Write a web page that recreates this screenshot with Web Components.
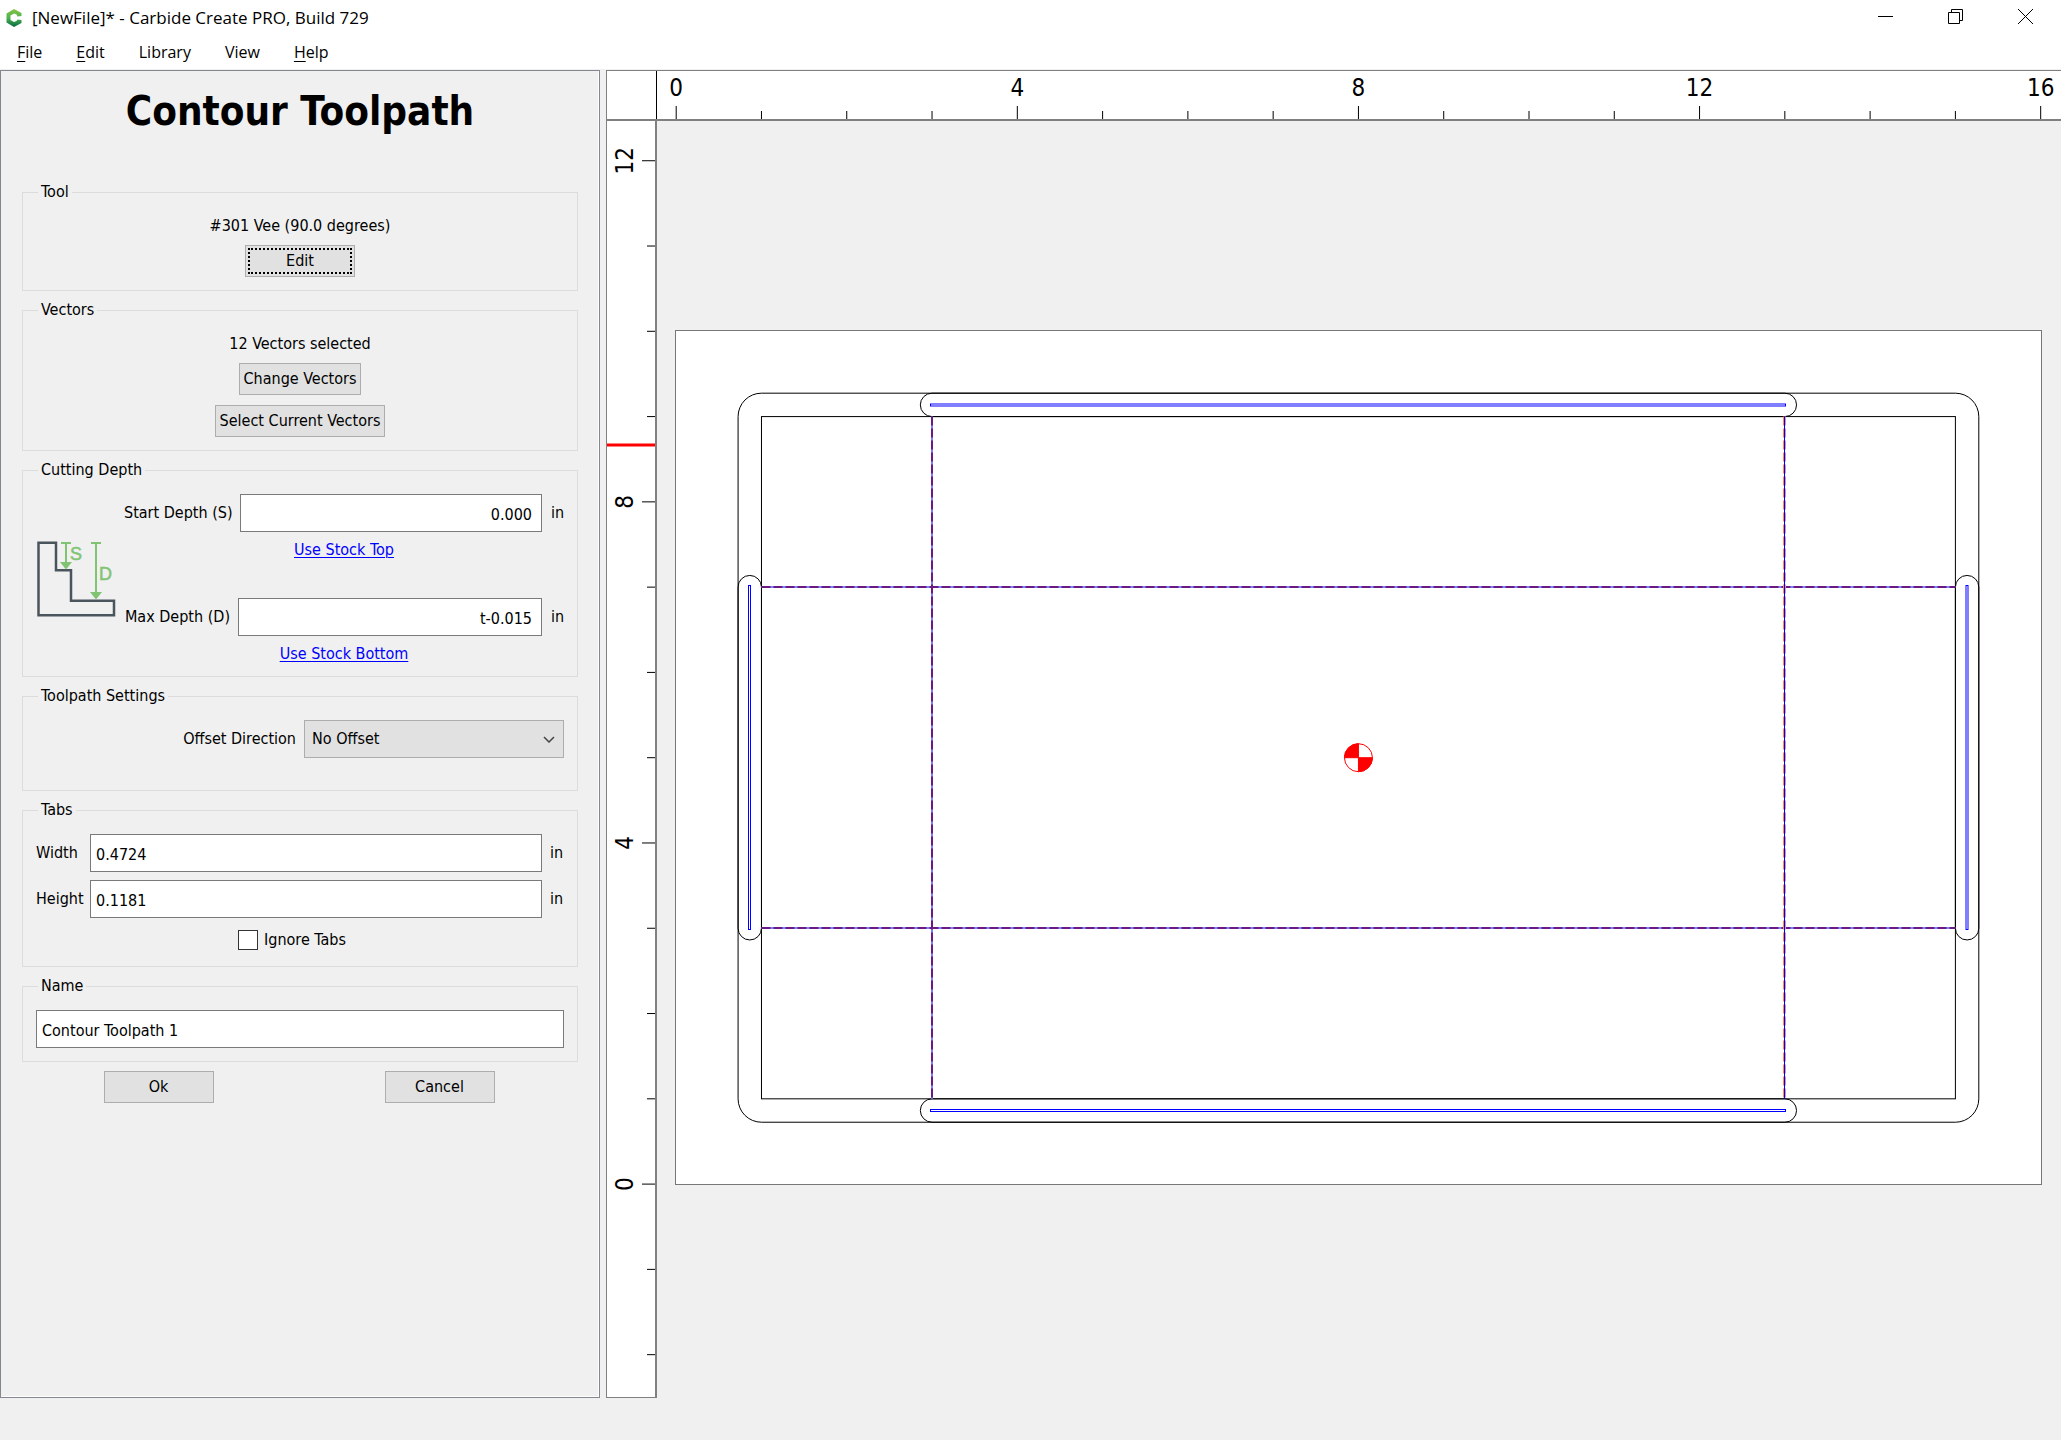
<!DOCTYPE html>
<html lang="en">
<head>
<meta charset="utf-8">
<title>[NewFile]* - Carbide Create PRO, Build 729</title>
<style>
  html, body { margin: 0; height: 100%; }
  body {
    background: #f0f0f0;
    color: #000;
    font: 16px/20px "DejaVu Sans Condensed", "DejaVu Sans", sans-serif;
    --title-font: 17px/20px "Open Sans", "Noto Sans", sans-serif;
    --menu-font: 16px/20px "Open Sans", "Noto Sans", sans-serif;
  }
</style>
</head>
<body>
<cc-window>
  <cc-titlebar slot="title">[NewFile]* - Carbide Create PRO, Build 729</cc-titlebar>
  <cc-menubar slot="menu">
    <cc-menu><u>F</u>ile</cc-menu>
    <cc-menu><u>E</u>dit</cc-menu>
    <cc-menu>Library</cc-menu>
    <cc-menu>View</cc-menu>
    <cc-menu><u>H</u>elp</cc-menu>
  </cc-menubar>

  <cc-panel slot="panel" heading="Contour Toolpath">
    <cc-group legend="Tool">
      <cc-stack>
        <span>#301 Vee (90.0 degrees)</span>
        <cc-button focused>Edit</cc-button>
      </cc-stack>
    </cc-group>

    <cc-group legend="Vectors">
      <cc-stack>
        <span>12 Vectors selected</span>
        <cc-stack spaced>
          <cc-button fit>Change Vectors</cc-button>
          <cc-button fit>Select Current Vectors</cc-button>
        </cc-stack>
      </cc-stack>
    </cc-group>

    <cc-group legend="Cutting Depth">
      <cc-depths>
        <cc-depth-icon slot="icon"></cc-depth-icon>
        <cc-depth>
          <cc-field label="Start Depth (S)" value="0.000" unit="in" align="right" style="--label: 108px"></cc-field>
          <cc-link>Use Stock Top</cc-link>
        </cc-depth>
        <cc-depth>
          <cc-field label="Max Depth (D)" value="t-0.015" unit="in" align="right" style="--label: 106px"></cc-field>
          <cc-link>Use Stock Bottom</cc-link>
        </cc-depth>
      </cc-depths>
    </cc-group>

    <cc-group legend="Toolpath Settings" roomy>
      <cc-select label="Offset Direction" options="No Offset|Outside / Right|Inside / Left"></cc-select>
    </cc-group>

    <cc-group legend="Tabs">
      <cc-rows>
        <cc-field label="Width" value="0.4724" unit="in" style="--label: 46px"></cc-field>
        <cc-field label="Height" value="0.1181" unit="in" style="--label: 46px"></cc-field>
        <cc-check label="Ignore Tabs"></cc-check>
      </cc-rows>
    </cc-group>

    <cc-group legend="Name">
      <cc-field name="Name" value="Contour Toolpath 1"></cc-field>
    </cc-group>

    <cc-actions>
      <cc-button>Ok</cc-button>
      <cc-button>Cancel</cc-button>
    </cc-actions>
  </cc-panel>

  <cc-workspace slot="work">
    <cc-ruler slot="top" axis="x"></cc-ruler>
    <cc-ruler slot="side" axis="y"></cc-ruler>
    <cc-stage slot="stage"></cc-stage>
  </cc-workspace>
</cc-window>

<script>
  // Registers an element whose shadow tree is built from a markup string.
  const define = (tag, render) => customElements.define(tag, class extends HTMLElement {
    connectedCallback() {
      if (this.shadowRoot) return;
      const template = document.createElement('template');
      template.innerHTML = '<style>:host,*{box-sizing:border-box}</style>' + render(this);
      this.attachShadow({ mode: 'open' }).append(template.content.cloneNode(true));
    }
  });

  /* ---- Window frame ---- */

  define('cc-window', () => `
    <style>
      :host { display: flex; flex-direction: column; min-height: 100vh; }
      header { background: #fff; }
      main { flex: 1; display: flex; gap: 6px; padding: 1px 0 42px; }
      slot[name=panel]::slotted(*) { flex: 0 0 600px; }
      slot[name=work]::slotted(*) { flex: 1; min-width: 0; }
    </style>
    <header><slot name="title"></slot><slot name="menu"></slot></header>
    <main><slot name="panel"></slot><slot name="work"></slot></main>`);

  define('cc-titlebar', () => `
    <style>
      :host { display: flex; align-items: center; height: 35px; padding: 0 1px 0 6px; font: var(--title-font); }
      .logo { flex: none; margin-right: 9px; }
      .text { flex: 1; }
      button { width: 70px; height: 33px; padding: 0; border: 0; background: none; align-self: flex-start; }
      button svg { display: block; margin: auto; fill: none; stroke: #000; }
    </style>
    <svg class="logo" width="17" height="18" viewBox="0 0 17 18">
      <defs><linearGradient id="g" x1="0" y1="0" x2="0" y2="1">
        <stop offset="0" stop-color="#86c440"/><stop offset=".5" stop-color="#4fb254"/><stop offset="1" stop-color="#04683f"/>
      </linearGradient></defs>
      <path fill="url(#g)" d="M8 0 L15.500 4 V7 L11.500 7.500 L10.500 5.500 L8 4.500 L4.500 6.500 V11 L8 13 L10.500 12 L11.500 10.500 L15.500 11 V14 L8 18 L0.500 13.500 V4.500 Z"/>
    </svg>
    <span class="text"><slot></slot></span>
    <button aria-label="Minimize"><svg width="15" height="15"><path d="M0 7.500H15"/></svg></button>
    <button aria-label="Restore"><svg width="15" height="15"><path d="M.5 3.500H11.500V14.500H.5ZM3.500 3.500V.5H14.500V11.500H11.500"/></svg></button>
    <button aria-label="Close"><svg width="15" height="15"><path d="M0 0L15 15M15 0L0 15"/></svg></button>`);

  define('cc-menubar', () => `
    <style>:host { display: flex; height: 34px; }</style>
    <slot></slot>`);

  define('cc-menu', () => `
    <style>
      :host { display: flex; }
      button { padding: 0 17px; border: 0; background: none; color: inherit; font: var(--menu-font); }
      ::slotted(u) { text-underline-offset: 3px; text-decoration-thickness: 1px; }
    </style>
    <button><slot></slot></button>`);

  /* ---- Side panel ---- */

  define('cc-panel', host => `
    <style>
      :host { display: flex; flex-direction: column; gap: 9px; padding: 18px 21px 0;
        border: 1px solid #828790; box-shadow: inset -1px -1px #fff; }
      h1 { margin: 0 0 40px; font-size: 40px; line-height: 44px; text-align: center; }
    </style>
    <h1>${host.getAttribute('heading')}</h1><slot></slot>`);

  define('cc-group', host => `
    <style>
      :host { display: block; }
      fieldset { margin: 0; min-width: 0; padding: 14px 13px 13px; border: 1px solid #dcdcdc; }
      :host([roomy]) fieldset { padding-bottom: 32px; }
      legend { margin-left: 2px; padding: 0 3px; line-height: 20px; }
    </style>
    <fieldset><legend>${host.getAttribute('legend')}</legend><slot></slot></fieldset>`);

  define('cc-stack', () => `
    <style>
      :host { display: flex; flex-direction: column; align-items: center; gap: 9px; }
      :host([spaced]) { gap: 10px; }
    </style>
    <slot></slot>`);

  define('cc-rows', () => `
    <style>:host { display: flex; flex-direction: column; gap: 8px; }</style>
    <slot></slot>`);

  define('cc-actions', () => `
    <style>
      :host { display: grid; grid-template-columns: 1fr 1fr; justify-items: center; gap: 8px; padding-right: 2px; }
    </style>
    <slot></slot>`);

  define('cc-button', () => `
    <style>
      :host { display: block; }
      button { display: block; width: 110px; height: 32px; padding: 0; border: 1px solid #adadad;
        background: #e1e1e1; color: inherit; font: inherit; line-height: 20px; }
      :host([fit]) button { width: auto; padding: 0 4px; }
      :host([focused]) button { outline: 2px dotted #000; outline-offset: -5px; }
    </style>
    <button><slot></slot></button>`);

  define('cc-link', () => `
    <style>
      :host { display: block; text-align: center; line-height: 18px; }
      a { color: #00f; text-underline-offset: 2px; text-decoration-thickness: 1px; }
    </style>
    <a href="#"><slot></slot></a>`);

  define('cc-field', host => {
    const get = name => host.getAttribute(name) || '';
    return `
    <style>
      :host { display: flex; align-items: center; gap: 8px; }
      label { flex: 0 0 var(--label, auto); min-width: 0; white-space: nowrap; }
      input { flex: 1; min-width: 0; height: 38px; padding: 2px 9px 0 5px; border: 1px solid #7a7a7a; border-radius: 0;
        background: #fff; color: inherit; font: inherit; }
      .unit { flex: 0 0 14px; }
      :host([align=right]) input { text-align: right; }
    </style>
    ${get('label') && `<label for="i">${get('label')}</label>`}
    <input id="i" type="text" value="${get('value')}" ${get('name') && `aria-label="${get('name')}"`}>
    ${get('unit') && `<span class="unit">${get('unit')}</span>`}`;
  });

  define('cc-select', host => `
    <style>
      :host { display: flex; align-items: center; justify-content: flex-end; gap: 8px; }
      .box { display: grid; flex: 0 0 260px; }
      .box > * { grid-area: 1 / 1; }
      select { appearance: none; height: 38px; padding: 0 30px 0 7px; border: 1px solid #adadad; border-radius: 0;
        background: #e1e1e1; color: inherit; font: inherit; }
      svg { place-self: center end; margin-right: 9px; fill: none; stroke: #444; pointer-events: none; }
    </style>
    <label for="s">${host.getAttribute('label')}</label>
    <div class="box">
      <select id="s">${host.getAttribute('options').split('|').map(o => `<option>${o}</option>`).join('')}</select>
      <svg width="12" height="7"><path d="M1 1L6 6L11 1" stroke-width="1.500"/></svg>
    </div>`);

  define('cc-check', host => `
    <style>
      :host { display: flex; justify-content: center; align-items: center; gap: 6px; height: 27px; padding-right: 16px; }
      input { appearance: none; width: 20px; height: 20px; margin: 0; border: 1px solid #333; background: #fff; }
    </style>
    <input id="c" type="checkbox"><label for="c">${host.getAttribute('label')}</label>`);

  define('cc-depths', () => `
    <style>
      :host { display: flex; align-items: center; gap: 8px; }
      .fields { flex: 1; display: flex; flex-direction: column; gap: 39px; }
    </style>
    <slot name="icon"></slot><div class="fields"><slot></slot></div>`);

  define('cc-depth', () => `
    <style>:host { display: flex; flex-direction: column; gap: 9px; }</style>
    <slot></slot>`);

  define('cc-depth-icon', () => `
    <style>
      :host { display: block; flex: 0 0 80px; }
      svg { display: block; }
      text { font: 18px "Liberation Sans", sans-serif; fill: #80c473; stroke: #80c473; stroke-width: .5; }
    </style>
    <svg width="80" height="78" fill="none">
      <path stroke="#4a545c" stroke-width="2.500" d="M2.500 2.700H20V30.300H35V60.700H78V75.300H2.500Z"/>
      <g stroke="#80c473" stroke-width="2"><path d="M25 3H35M30 3V24M55 3H65M60 3V54"/></g>
      <path fill="#80c473" d="M24 22H36L30 29.500ZM54 52H66L60 59.500Z"/>
      <text x="34" y="20">S</text><text x="63" y="40">D</text>
    </svg>`);

  /* ---- Drawing area ---- */

  // One inch of stock on screen, and where the stock's lower left corner sits in the stage.
  const INCH = 85.28, ORIGIN_X = 19.2, ORIGIN_Y = 1063.1;
  const X = u => ORIGIN_X + u * INCH;
  const Y = u => ORIGIN_Y - u * INCH;

  define('cc-workspace', () => `
    <style>
      :host { display: grid; grid-template: 51px 1fr / 51px 1fr; }
      .corner { background: #fff; border: solid #808080; border-width: 1px 0 2px 1px; box-shadow: inset -1px 0 #000; }
      ::slotted(*) { min-width: 0; min-height: 0; }
    </style>
    <div class="corner"></div>
    <slot name="top"></slot><slot name="side"></slot><slot name="stage"></slot>`);

  define('cc-ruler', host => {
    const horizontal = host.getAttribute('axis') === 'x';
    let marks = '';
    for (let u = horizontal ? 0 : -2; u <= (horizontal ? 16 : 12); u++) {
      const major = u % 4 === 0;
      const length = major ? 15 : 10;
      if (horizontal) {
        marks += `<path d="M${X(u)} ${50 - length}V50"/>`;
        if (major) marks += `<text x="${X(u)}" y="25">${u}</text>`;
      } else {
        marks += `<path d="M${50 - length} ${Y(u)}H50"/>`;
        if (major) marks += `<text transform="translate(26 ${Y(u)}) rotate(-90)">${u}</text>`;
      }
    }
    if (!horizontal) marks += '<path d="M0 324H50" style="stroke:#f00;stroke-width:3"/>';
    return `
    <style>
      :host { display: block; background: #fff; overflow: hidden; border: solid #808080;
        border-width: ${horizontal ? '1px 0 2px 0' : '0 2px 1px 1px'}; }
      svg { display: block; width: 100%; height: 100%; }
      path { stroke: #000; }
      text { font-size: 24px; text-anchor: middle; }
    </style>
    <svg>${marks}</svg>`;
  });

  define('cc-stage', () => {
    const rect = (x1, y1, x2, y2, r = 0) =>
      `<rect x="${x1}" y="${y1}" width="${x2 - x1}" height="${y2 - y1}" rx="${r}"/>`;
    const left = X(1), right = X(15), top = Y(9), bottom = Y(1), rim = 23.4, cap = 11.7;
    const cut = d => `<path class="blue" d="${d}"/><path class="dash" d="${d}"/>`;
    const cx = X(8), cy = Y(5);
    return `
    <style>
      :host { display: block; overflow: hidden; }
      svg { display: block; width: 100%; height: 100%; fill: none; stroke: #000; }
      .stock { fill: #fff; stroke: #777; }
      .path { stroke: #00f; }
      .blue { stroke: #7f7fff; stroke-width: 2; }
      .dash { stroke: #6a1a80; stroke-width: 2; stroke-dasharray: 9 3; }
      .side { stroke: #f0906c; stroke-width: 3; stroke-dasharray: 9 3; }
      .core { stroke: #00f; }
    </style>
    <svg>
      <g class="stock">${rect(18.5, 209.5, 1384.5, 1063.5)}</g>
      ${rect(left - rim, top - rim, right + rim, bottom + rim, rim)}
      ${rect(left, top, right, bottom)}
      ${rect(X(3) - cap, top - rim, X(13) + cap, top, cap)}
      ${rect(X(3) - cap, bottom, X(13) + cap, bottom + rim, cap)}
      ${rect(left - rim, Y(7) - cap, left, Y(3) + cap, cap)}
      ${rect(right, Y(7) - cap, right + rim, Y(3) + cap, cap)}
      <g class="path">
        ${rect(273.5, 283, 1128.5, 285)}${rect(273.5, 988.5, 1128.5, 990.5)}
        ${rect(91.5, 464.5, 93.5, 808.5)}${rect(1309, 464.5, 1311, 808.5)}
      </g>
      ${cut(`M${left} 466H${right}`)}${cut(`M${left} 807H${right}`)}${cut(`M275 ${top}V${bottom}`)}
      <path class="side" d="M1127.500 ${top}V${bottom}"/><path class="core" d="M1127.500 ${top}V${bottom}"/>
      <g stroke="#f00">
        <circle cx="${cx}" cy="${cy}" r="14" fill="#fff"/>
        <path fill="#f00" d="M${cx} ${cy}V${cy - 14}A14 14 0 0 0 ${cx - 14} ${cy}H${cx + 14}A14 14 0 0 1 ${cx} ${cy + 14}Z"/>
      </g>
    </svg>`;
  });
</script>
</body>
</html>
